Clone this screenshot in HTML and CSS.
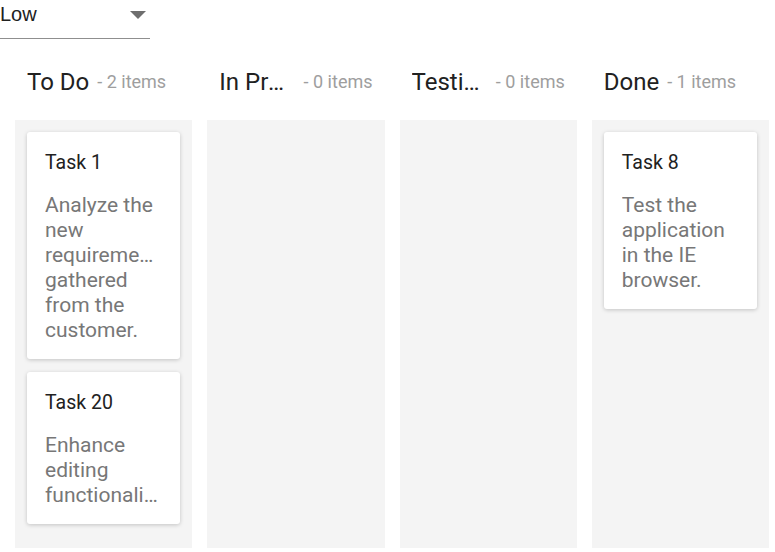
FILE: index.html
```html
<!DOCTYPE html>
<html>
<head>
<meta charset="utf-8">
<link rel="stylesheet" href="styles.css">
</head>
<body>
<div class="dropdown">
  <span class="dropdown-value">Low</span>
  <span class="caret"></span>
</div>
<div class="board">
  <section class="lane">
    <header class="lane-header"><span class="lane-title">To Do</span><span class="lane-count">- 2 items</span></header>
    <div class="lane-body">
      <div class="card"><div class="card-title">Task 1</div><div class="card-text">Analyze the new requirements gathered from the customer.</div></div>
      <div class="card"><div class="card-title">Task 20</div><div class="card-text">Enhance editing functionality.</div></div>
    </div>
  </section>
  <section class="lane">
    <header class="lane-header"><span class="lane-title">In Progress</span><span class="lane-count">- 0 items</span></header>
    <div class="lane-body"></div>
  </section>
  <section class="lane">
    <header class="lane-header"><span class="lane-title">Testing</span><span class="lane-count">- 0 items</span></header>
    <div class="lane-body"></div>
  </section>
  <section class="lane">
    <header class="lane-header"><span class="lane-title">Done</span><span class="lane-count">- 1 items</span></header>
    <div class="lane-body">
      <div class="card"><div class="card-title">Task 8</div><div class="card-text">Test the application in the IE browser.</div></div>
    </div>
  </section>
</div>
</body>
</html>
```
FILE: styles.css
```css
html, body {
  margin: 0;
  padding: 0;
  background: #fff;
}
body {
  font-family: Roboto, "Liberation Sans", sans-serif;
}
.dropdown {
  width: 150px;
  height: 38px;
  border-bottom: 1px solid #8f8f8f;
  display: flex;
  align-items: flex-start;
  justify-content: space-between;
  box-sizing: content-box;
}
.dropdown-value {
  font-family: "Liberation Sans", Arial, sans-serif;
  font-size: 20px;
  line-height: 28px;
  color: #212121;
}
.caret {
  width: 0;
  height: 0;
  border-left: 8.5px solid transparent;
  border-right: 8.5px solid transparent;
  border-top: 8px solid #6e6e6e;
  margin: 11px 4px 0 0;
}
.board {
  display: grid;
  grid-template-columns: repeat(4, 1fr);
  column-gap: 15px;
  padding: 23px 6px 0 15px;
}
.lane {
  display: flex;
  flex-direction: column;
  min-width: 0;
}
.lane-header {
  display: flex;
  align-items: baseline;
  gap: 8px;
  height: 40px;
  line-height: 40px;
  padding: 0 12px;
  margin-bottom: 18px;
  white-space: nowrap;
}
.lane-title {
  font-size: 24px;
  color: #212121;
  overflow: hidden;
  text-overflow: ellipsis;
  flex: 0 1 auto;
  min-width: 0;
}
.lane-count {
  font-size: 18px;
  color: #9e9e9e;
  flex: 0 0 auto;
  align-self: center;
}
.lane-body {
  background: #f4f4f4;
  height: 428px;
  padding: 12px;
  box-sizing: border-box;
  display: flex;
  flex-direction: column;
  gap: 13px;
}
.card {
  background: #fff;
  border-radius: 3px;
  box-shadow: 0 1px 4px rgba(0, 0, 0, 0.2);
  padding: 19px 18px 16px;
}
.card-title {
  font-size: 19.5px;
  line-height: 24px;
  color: #212121;
  margin-bottom: 18px;
}
.card-text {
  font-size: 21px;
  line-height: 25px;
  color: #777;
  overflow: hidden;
  text-overflow: ellipsis;
}
```
